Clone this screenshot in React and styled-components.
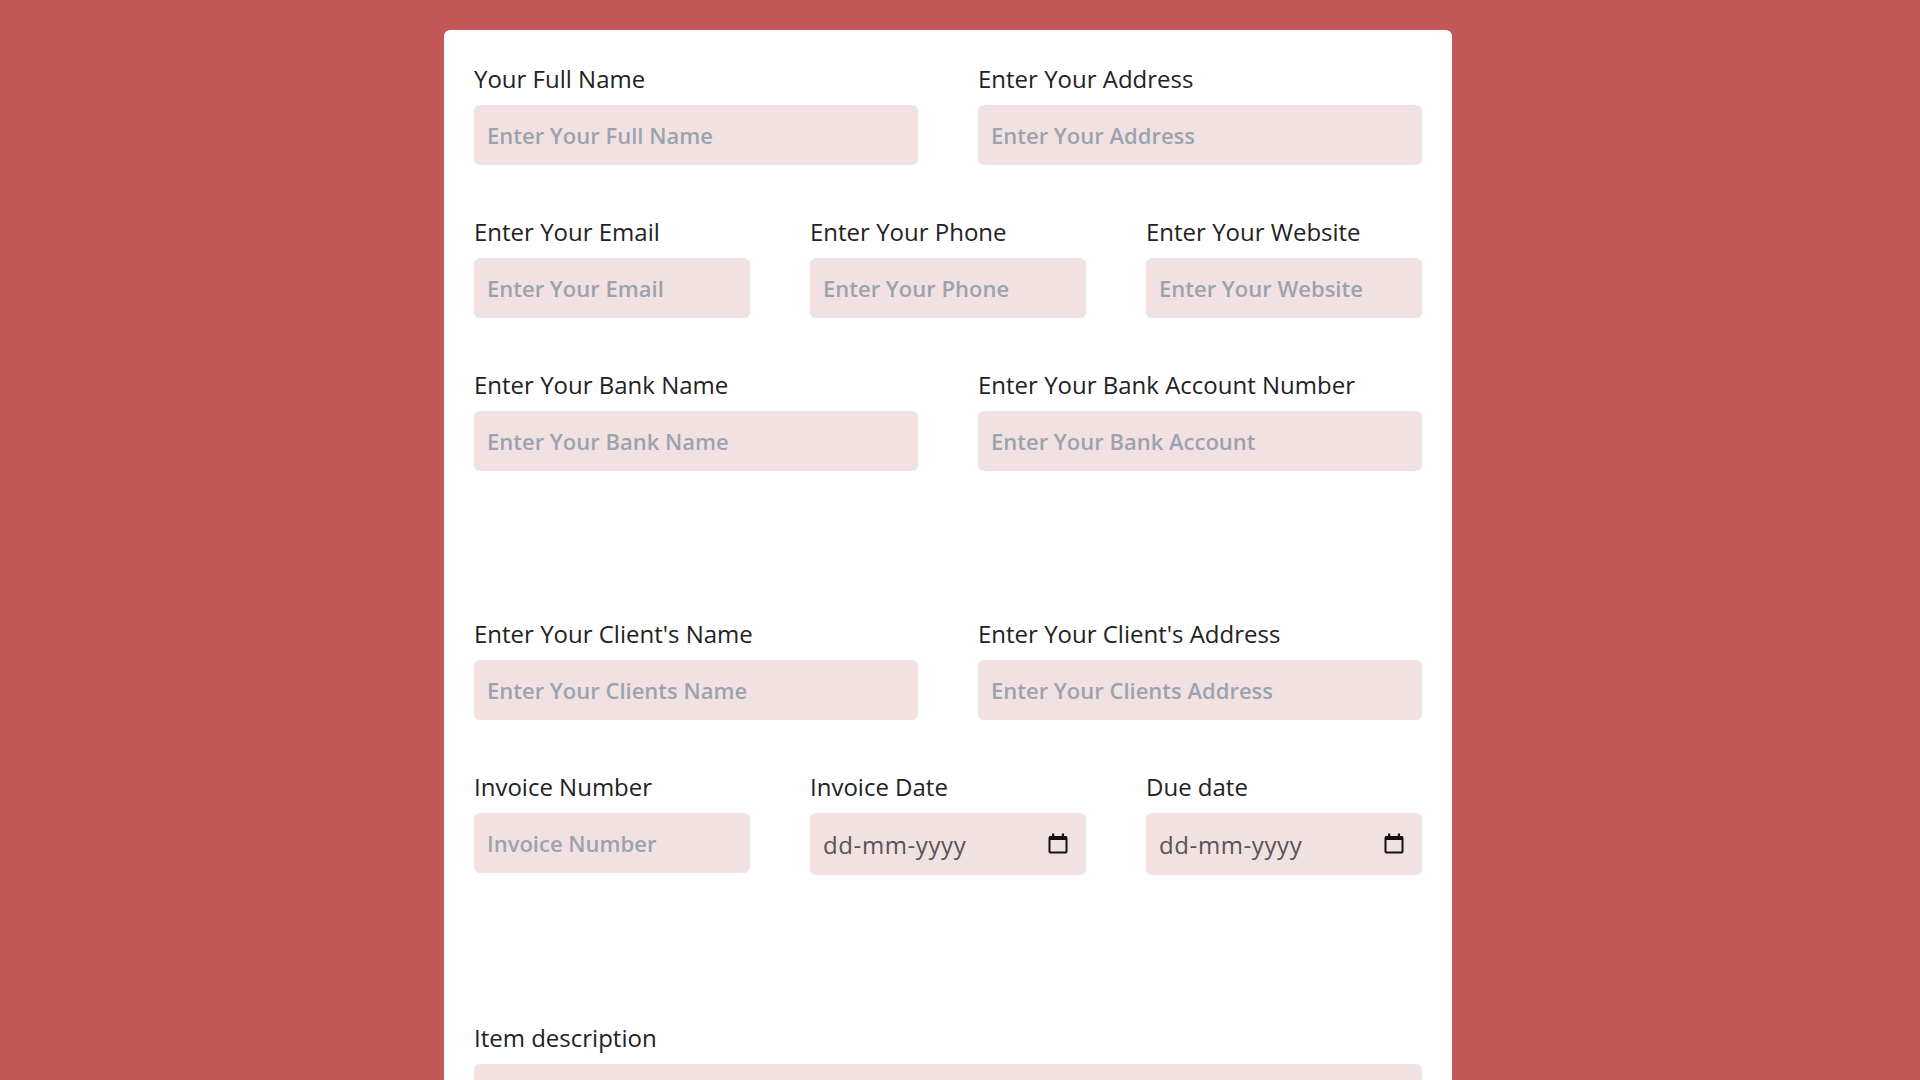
import React from 'react';
import styled, { createGlobalStyle } from 'styled-components';

const GlobalStyle = createGlobalStyle`
    html, body {
        margin: 0;
        padding: 0;
        background: #c35858;
    }
    * {
        box-sizing: border-box;
    }
    body {
        font-family: "Open Sans", "Noto Sans", sans-serif;
    }
`;

export default function App() {
    return (
        <Page>
            <GlobalStyle />
            <Card>
                <Section>
                    <Row cols={2}>
                        <Field label='Your Full Name' placeholder='Enter Your Full Name' />
                        <Field label='Enter Your Address' placeholder='Enter Your Address' />
                    </Row>
                    <Row cols={3}>
                        <Field label='Enter Your Email' placeholder='Enter Your Email' type='email' />
                        <Field label='Enter Your Phone' placeholder='Enter Your Phone' />
                        <Field label='Enter Your Website' placeholder='Enter Your Website' />
                    </Row>
                    <Row cols={2}>
                        <Field label='Enter Your Bank Name' placeholder='Enter Your Bank Name' />
                        <Field label='Enter Your Bank Account Number' placeholder='Enter Your Bank Account' />
                    </Row>
                </Section>

                <Section>
                    <Row cols={2}>
                        <Field label="Enter Your Client's Name" placeholder='Enter Your Clients Name' />
                        <Field label="Enter Your Client's Address" placeholder='Enter Your Clients Address' />
                    </Row>
                    <Row cols={3}>
                        <Field label='Invoice Number' placeholder='Invoice Number' />
                        <DateField label='Invoice Date' />
                        <DateField label='Due date' />
                    </Row>
                </Section>

                <Section>
                    <Row cols={1}>
                        <Group>
                            <Label>Item description</Label>
                            <TextArea rows={4} />
                        </Group>
                    </Row>
                    <Row cols={3}>
                        <Field label='Quantity' placeholder='Quantity' />
                        <Field label='Price' placeholder='Price' />
                        <Group>
                            <Label>Amount</Label>
                            <Amount>0</Amount>
                        </Group>
                    </Row>
                    <AddButton type='button'>Add Table Item</AddButton>
                </Section>

                <Section>
                    <Row cols={1}>
                        <Group>
                            <Label>Additional Notes</Label>
                            <TextArea rows={6} placeholder='Additional notes to the client' />
                        </Group>
                    </Row>
                    <PreviewButton type='button'>Preview Invoice</PreviewButton>
                </Section>
            </Card>
        </Page>
    );
}

function Field({ label, placeholder, type = 'text' }) {
    return (
        <Group>
            <Label>{label}</Label>
            <Input type={type} placeholder={placeholder} />
        </Group>
    );
}

function DateField({ label }) {
    return (
        <Group>
            <Label>{label}</Label>
            <DateWrap>
                <DateInput type='text' placeholder='dd-mm-yyyy' />
                <CalendarIcon width='20' height='21' viewBox='0 0 20 21'>
                    <rect x='1.5' y='4' width='17' height='15.5' rx='1' fill='none' stroke='#111' strokeWidth='2' />
                    <rect x='1.5' y='3' width='17' height='4' fill='#111' />
                    <rect x='4' y='0.5' width='2.2' height='4' fill='#111' />
                    <rect x='13.8' y='0.5' width='2.2' height='4' fill='#111' />
                </CalendarIcon>
            </DateWrap>
        </Group>
    );
}

// the card sits a little left of centre (the original page had a scrollbar)
const Page = styled.div`
    display: flex;
    justify-content: center;
    padding: 30px 24px 120px 0;
    min-height: 100vh;
`;

const Card = styled.div`
    width: 1008px;
    background: #ffffff;
    border-radius: 6px;
    padding: 30px 30px 60px;
`;

const Section = styled.section`
    padding-bottom: 96px;
`;

const Row = styled.div`
    display: grid;
    grid-template-columns: repeat(${props => props.cols}, 1fr);
    column-gap: 60px;
    margin-bottom: 48px;
`;

const Group = styled.div`
    display: flex;
    flex-direction: column;
`;

const Label = styled.label`
    font-size: 24px;
    line-height: 38px;
    font-weight: 500;
    color: #222;
    margin-bottom: 7px;
`;

const Input = styled.input`
    height: 60px;
    width: 100%;
    background: #f2e1e1;
    border: none;
    border-radius: 6px;
    padding: 0 13px;
    font-family: inherit;
    font-size: 22px;
    font-weight: 600;
    color: #333;
    outline: none;

    &::placeholder {
        color: #9ca3af;
    }
`;

const DateWrap = styled.div`
    position: relative;
`;

const DateInput = styled(Input)`
    height: 62px;
    font-size: 24px;
    font-weight: 400;
    letter-spacing: 0.6px;
    padding-right: 48px;

    &::placeholder {
        color: #555;
    }
`;

const CalendarIcon = styled.svg`
    position: absolute;
    right: 18px;
    top: 20px;
`;

const TextArea = styled.textarea`
    width: 100%;
    background: #f2e1e1;
    border: none;
    border-radius: 6px;
    padding: 13px;
    font-family: inherit;
    font-size: 22px;
    font-weight: 600;
    resize: vertical;
    outline: none;

    &::placeholder {
        color: #9ca3af;
    }
`;

const Amount = styled.p`
    margin: 0;
    height: 60px;
    line-height: 60px;
    font-size: 22px;
    color: #333;
`;

const AddButton = styled.button`
    background: #3b82f6;
    color: #fff;
    border: 2px solid #3b82f6;
    border-radius: 6px;
    padding: 12px 32px;
    font-family: inherit;
    font-size: 22px;
    font-weight: 700;
`;

const PreviewButton = styled(AddButton)`
    width: 100%;
    background: #c35858;
    border-color: #c35858;
`;
